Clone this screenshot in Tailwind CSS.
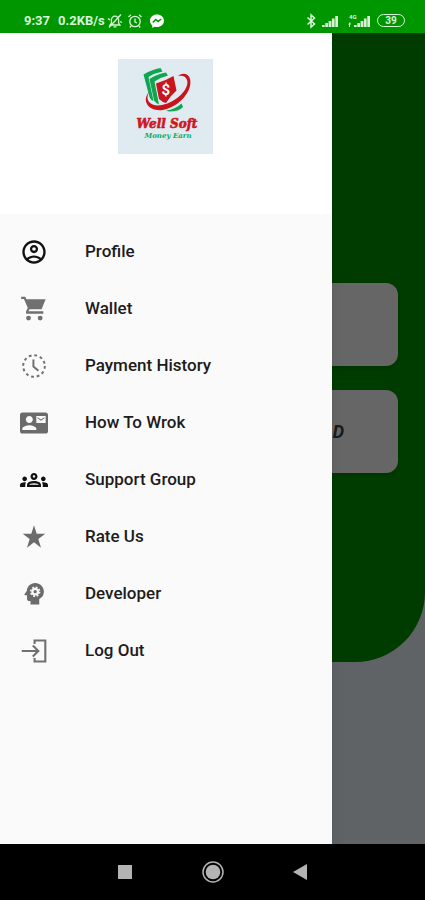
<!DOCTYPE html>
<html lang="en">
<head>
  <meta charset="UTF-8" />
  <meta name="viewport" content="width=device-width, initial-scale=1" />
  <title>Well Soft Money Earn</title>
  <script src="https://cdn.jsdelivr.net/npm/@tailwindcss/browser@4"></script>
</head>
<body class="bg-black font-['Roboto',sans-serif]">
  <div class="flex flex-col h-screen overflow-hidden">

    <!-- Status bar -->
    <header class="flex items-center justify-between h-[33px] shrink-0 bg-[#009600] pl-6 pr-5 pt-2 text-[#d8f5d8]">
      <div class="flex items-center text-[13px] leading-4 font-bold">
        <span class="mr-2">9:37</span>
        <span>0.2KB/s</span>
        <svg class="w-4 h-4 ml-0.5" viewBox="0 0 16 16" fill="none" stroke="currentColor" stroke-width="1.3">
          <path d="M3 12h10l-1.4-2V7A3.6 3.6 0 0 0 8 3.2 3.6 3.6 0 0 0 4.4 7v3zM6.5 13.8h3M14 1.5 2 14.5M1 5.5 3 7M13 8.5l2 1" />
        </svg>
        <svg class="w-4 h-4 ml-1" viewBox="0 0 16 16" fill="none" stroke="currentColor" stroke-width="1.3">
          <circle cx="8" cy="8.5" r="5.2" />
          <path d="M8 5.5V9l2 1M1.500 4 4 1.800M14.500 4 12 1.800M4 13l-1.200 1.500M12 13l1.200 1.500" />
        </svg>
        <svg class="w-4 h-4 ml-1.5" viewBox="0 0 16 16">
          <path fill="#fff" d="M8 1.500c-3.900 0-7 2.700-7 6.300 0 1.900.9 3.600 2.300 4.700V15l2.200-1.200c.8.2 1.600.3 2.500.3 3.900 0 7-2.700 7-6.300s-3.100-6.300-7-6.300z" />
          <path fill="none" stroke="#009600" stroke-width="1.5" d="m3.800 9.500 3-3 2.300 2 3.100-2.500" />
        </svg>
      </div>
      <div class="flex items-center">
        <svg class="w-3 h-4" viewBox="0 0 12 16" fill="none" stroke="currentColor" stroke-width="1.5">
          <path d="m2.500 4.500 7 6.500L6 14V2l3.500 3-7 6.500" />
        </svg>
        <svg class="w-[18px] h-4 ml-1" viewBox="0 0 18 16" fill="currentColor">
          <path d="M1 12h2.700v2H1zM4.300 10H7v4H4.300zM7.600 8h2.700v6H7.600zM10.900 5.500h2.700V14h-2.700zM14.300 3H17v11h-2.700z" />
        </svg>
        <svg class="w-6 h-4 ml-2" viewBox="0 0 24 16" fill="currentColor">
          <path d="M7 12h2.700v2H7zM10.300 10H13v4h-2.700zM13.600 8h2.700v6h-2.700zM16.900 5.500h2.700V14h-2.700zM20.300 3H23v11h-2.700zM3 9 1 11.500h1V14h1v-2.500h1z" />
          <text x="2" y="5.500" font-size="6" font-weight="bold">4G</text>
        </svg>
        <div class="flex items-center justify-center w-7 h-[13px] ml-1.5 rounded-full border border-current text-[10px] leading-3 font-bold">
          <span>39</span>
        </div>
      </div>
    </header>

    <div class="relative flex-1 min-h-0 bg-[#eef7ff]">
      <!-- Home screen -->
      <main class="h-[629px] rounded-br-[70px] bg-[#009600] pt-[250px] px-[27px]">
        <div class="flex flex-col gap-6">
          <div class="h-[83px] rounded-xl bg-white shadow-md"></div>
          <div class="flex items-center justify-end h-[83px] rounded-xl bg-white shadow-md pr-[54px] text-lg font-bold italic text-[#444]">D</div>
        </div>
      </main>

      <!-- Scrim -->
      <div class="absolute inset-0 bg-black/60"></div>

      <!-- Drawer -->
      <aside class="absolute inset-y-0 left-0 w-[78%] bg-[#fafafa] shadow-lg">
        <div class="flex justify-center h-[181px] bg-white pt-[26px]">
          <svg class="w-[95px] h-[95px]" viewBox="0 0 95 95" role="img" aria-label="Well Soft Money Earn">
            <rect width="95" height="95" fill="#dfebf0" />
            <g fill="#10a650">
              <path d="M25.500 15.500q8-5 17-6.500l2 3.500q-8 1.500-14 5.500l5 24q-3-1-4-4z" />
              <path d="M31.500 20q7-5 16.500-6.500l2 3q-8 2-13.500 6l4.500 23q-3-1-5-4z" />
              <path d="M48 51.500q9-1 15.500-7l1.500 3.500q-4 4.500-14 4.500z" />
            </g>
            <path d="M38 24.500q10-3 17.500-7.500l3 14.500q-6 5-10.500 12.500-4-1-7-4z" fill="#c9141e" />
            <path d="M31 33c-5 9 3 15 13 13 15-3 28-17 25-25-1-4-5-5-9-4 5-4 11-2 12 3 3 12-11 28-27 31-14 2-22-9-14-18z" fill="#c9141e" />
            <text x="43.500" y="36" font-size="15" font-weight="bold" fill="#fff">$</text>
            <text x="49" y="69" text-anchor="middle" font-family="DejaVu Serif" font-size="12" font-weight="bold" font-style="italic" fill="#cf1520" stroke="#cf1520" stroke-width=".6">Well Soft</text>
            <text x="50" y="79" text-anchor="middle" font-family="DejaVu Serif" font-size="7" font-weight="bold" font-style="italic" fill="#12a85a">Money Earn</text>
          </svg>
        </div>

        <nav class="pt-[9px] text-[17px] font-medium text-[#1c1c1c]">
          <a href="#profile" class="flex items-center gap-[37px] h-[57px] pl-5">
            <svg class="w-7 h-7 text-[#111]" viewBox="0 0 24 24" fill="currentColor">
              <path d="M12 2C6.480 2 2 6.480 2 12s4.480 10 10 10 10-4.480 10-10S17.520 2 12 2zM7.350 18.500C8.660 17.560 10.260 17 12 17s3.340.56 4.650 1.500c-1.310.94-2.910 1.500-4.650 1.500s-3.340-.56-4.650-1.500zm10.790-1.380C16.450 15.800 14.320 15 12 15s-4.450.8-6.140 2.120C4.700 15.730 4 13.950 4 12c0-4.420 3.580-8 8-8s8 3.580 8 8c0 1.950-.7 3.730-1.860 5.120zM12 6c-1.930 0-3.500 1.570-3.500 3.500S10.070 13 12 13s3.500-1.570 3.500-3.500S13.930 6 12 6zm0 5c-.83 0-1.500-.67-1.500-1.500S11.170 8 12 8s1.500.67 1.500 1.500S12.830 11 12 11z" />
            </svg>
            <span>Profile</span>
          </a>
          <a href="#wallet" class="flex items-center gap-[37px] h-[57px] pl-5">
            <svg class="w-7 h-7 text-[#707070]" viewBox="0 0 24 24" fill="currentColor">
              <path d="M1 1.500h3.500l1 2.100H22l-3.500 8.700H8.300l-1.200 1.700H20v2H5.200V14l1.500-2.800L3.400 3.500H1z" />
              <circle cx="7.300" cy="19.800" r="2.100" />
              <circle cx="17.300" cy="19.800" r="2.100" />
            </svg>
            <span>Wallet</span>
          </a>
          <a href="#history" class="flex items-center gap-[37px] h-[57px] pl-5">
            <svg class="w-7 h-7 text-[#707070]" viewBox="0 0 24 24" fill="none" stroke="currentColor">
              <circle cx="12" cy="12" r="9.300" stroke-width="1.700" stroke-dasharray="2.400 2.470" />
              <path d="M11.500 6.500v6l4.300 3.600" stroke-width="1.700" />
            </svg>
            <span>Payment History</span>
          </a>
          <a href="#how-to-work" class="flex items-center gap-[37px] h-[57px] pl-5">
            <svg class="w-7 h-7 text-[#6b6b6b]" viewBox="0 0 24 24" fill="currentColor">
              <path fill-rule="evenodd" d="M22 3H2C.9 3 0 3.900 0 5v14c0 1.100.9 2 2 2h20c1.100 0 2-.9 2-2V5c0-1.100-.9-2-2-2zM8 6c1.660 0 3 1.340 3 3s-1.340 3-3 3-3-1.340-3-3 1.340-3 3-3zm6 12H2v-1c0-2 4-3.100 6-3.100s6 1.100 6 3.100v1zm8-6h-8V6h8v6zm-1-5-3 2-3-2v1l3 2 3-2V7z" />
            </svg>
            <span>How To Wrok</span>
          </a>
          <a href="#support" class="flex items-center gap-[37px] h-[57px] pl-5">
            <svg class="w-7 h-7 text-[#111]" viewBox="0 0 24 24" fill="currentColor">
              <path d="M4 13c1.100 0 2-.9 2-2s-.9-2-2-2-2 .9-2 2 .9 2 2 2zm1.130 1.100c-.37-.06-.74-.1-1.130-.1-.99 0-1.930.21-2.780.58C.48 14.900 0 15.620 0 16.430V18h4.500v-1.610c0-.83.23-1.610.63-2.290zM20 13c1.100 0 2-.9 2-2s-.9-2-2-2-2 .9-2 2 .9 2 2 2zm4 3.430c0-.81-.48-1.530-1.220-1.850-.85-.37-1.790-.58-2.780-.58-.39 0-.76.04-1.130.1.400.68.63 1.460.63 2.290V18H24v-1.570zm-7.760-2.780c-1.170-.52-2.610-.9-4.240-.9-1.630 0-3.070.39-4.240.9C6.680 14.130 6 15.210 6 16.390V18h12v-1.610c0-1.180-.68-2.260-1.760-2.740zM8.070 16c.09-.23.13-.39.91-.69.97-.38 1.990-.56 3.020-.56s2.050.18 3.020.56c.77.3.81.46.91.69H8.070zM12 8c.55 0 1 .45 1 1s-.45 1-1 1-1-.45-1-1 .45-1 1-1m0-2c-1.660 0-3 1.340-3 3s1.340 3 3 3 3-1.340 3-3-1.340-3-3-3z" />
            </svg>
            <span>Support Group</span>
          </a>
          <a href="#rate" class="flex items-center gap-[37px] h-[57px] pl-5">
            <svg class="w-7 h-7 text-[#6b6b6b]" viewBox="0 0 24 24" fill="currentColor">
              <path d="m12 2 2.300 7.300h7.400l-6 4.400 2.300 7.500-6-4.600-6 4.600 2.300-7.500-6-4.400h7.400z" />
            </svg>
            <span>Rate Us</span>
          </a>
          <a href="#developer" class="flex items-center gap-[37px] h-[57px] pl-5">
            <svg class="w-7 h-7 text-[#6b6b6b]" viewBox="0 0 24 24" fill="currentColor">
              <path d="M13 2.500c-4 0-7 3.100-7.200 6.900l-2 2.900c-.2.400 0 .8.400.8H6v3c0 1.100.9 2 2 2h1v3h7.500v-4.800c2.300-1.100 4-3.500 4-6.300 0-4.100-3.400-7.500-7.500-7.500z" />
              <circle cx="13" cy="10" r="3.300" fill="#fafafa" />
              <circle cx="13" cy="10" r="3.800" fill="none" stroke="#fafafa" stroke-width="1.400" stroke-dasharray="1.600 1.380" />
              <circle cx="13" cy="10" r="1.400" />
            </svg>
            <span>Developer</span>
          </a>
          <a href="#logout" class="flex items-center gap-[37px] h-[57px] pl-5">
            <svg class="w-7 h-7 text-[#707070]" viewBox="0 0 24 24" fill="none" stroke="currentColor" stroke-width="1.800">
              <path d="M12.500 6V3h9.200v18h-9.200v-3M1.500 12h14M11 7.300l4.700 4.700-4.700 4.700" />
            </svg>
            <span>Log Out</span>
          </a>
        </nav>
      </aside>
    </div>

    <!-- Navigation bar -->
    <footer class="flex items-center justify-center gap-16 h-14 shrink-0 bg-black text-[#b4b4b4]">
      <button type="button" aria-label="Recent apps">
        <svg class="w-6 h-6" viewBox="0 0 24 24" fill="currentColor"><path d="M5 5h14v14H5z" /></svg>
      </button>
      <button type="button" aria-label="Home">
        <svg class="w-6 h-6" viewBox="0 0 24 24">
          <circle cx="12" cy="12" r="10" fill="none" stroke="currentColor" stroke-width="1.5" />
          <circle cx="12" cy="12" r="7.300" fill="currentColor" />
        </svg>
      </button>
      <button type="button" aria-label="Back">
        <svg class="w-6 h-6" viewBox="0 0 24 24" fill="currentColor"><path d="M4 12 18 4v16z" /></svg>
      </button>
    </footer>
  </div>
</body>
</html>
